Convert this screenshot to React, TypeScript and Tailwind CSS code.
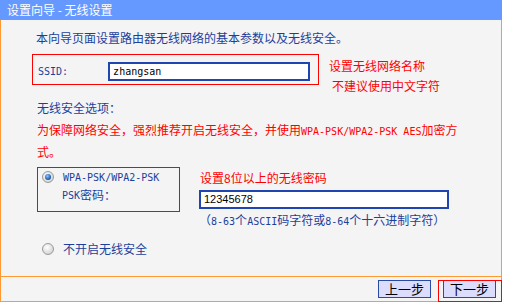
import React from 'react'

const mono = "font-['DejaVu_Sans_Mono',monospace] text-[10px]"

function Radio({ checked }: { checked?: boolean }) {
  return (
    <span className="relative inline-block w-[12px] h-[12px] shrink-0 rounded-full border border-[#9a9a9a] bg-[radial-gradient(circle_at_40%_35%,#ffffff,#d8d8d8_70%,#b4b4b4)]">
      {checked && (
        <span className="absolute left-[2px] top-[2px] w-[6px] h-[6px] rounded-full bg-[radial-gradient(circle_at_40%_35%,#8cc8ff,#1d63b8_60%,#0b2f6e)]" />
      )}
    </span>
  )
}

export default function App(): JSX.Element {
  return (
    <div className="w-[507px] h-[306px] bg-white text-[12px] font-['Noto_Sans_CJK_SC',sans-serif]">
      <div className="w-[502px] h-[20px] bg-[#6699ff] pl-[7px] leading-[20px] text-white">设置向导 - 无线设置</div>
      <div className="w-[502px] border-x border-b border-[#ff9933] bg-[#f4f4f4]">
        <div className="h-[256px] pl-[31px] pt-[11px]">
          <p className="pl-[4px] leading-[14px] text-[#1c3f9c]">本向导页面设置路由器无线网络的基本参数以及无线安全。</p>

          <div className="flex h-[31px] mt-[9px]">
            <div className="w-[287px] h-[31px] border border-[#ff0000] pl-[5px] pt-[7px]">
              <div className="flex h-[19px] items-center">
                <span className={`${mono} text-[#1c3f9c]`}>SSID:</span>
                <div className={`ml-[40px] w-[202px] h-[19px] border-2 border-[#1f45b0] bg-white pl-[3px] leading-[15px] text-black ${mono}`}>zhangsan</div>
              </div>
            </div>
            <div className="ml-[10px] pt-[2px] leading-[20px] text-[#ff0000]">
              <div>设置无线网络名称</div>
              <div className="pl-[3px]">不建议使用中文字符</div>
            </div>
          </div>

          <p className="mt-[16px] pl-[5px] leading-[14px] text-[#1c3f9c]">无线安全选项：</p>
          <p className="mt-[5px] pl-[5px] leading-[20px] text-[#ff0000]">
            为保障网络安全，强烈推荐开启无线安全，并使用<span className={mono}>WPA-PSK/WPA2-PSK AES</span>加密方
            <br />
            式。
          </p>

          <div className="flex mt-[5px] ml-[5px]">
            <div className="w-[143px] h-[45px] border border-[#ff0000] pl-[4px] pt-[1px] text-[#1c3f9c]">
              <div className="flex h-[16px] items-center gap-[9px]">
                <Radio checked />
                <span className={mono}>WPA-PSK/WPA2-PSK</span>
              </div>
              <div className="flex h-[16px] mt-[2px] items-center pl-[20px]">
                <span className={mono}>PSK</span>
                <span>密码：</span>
              </div>
            </div>
            <div className="ml-[19px] pt-[4px]">
              <p className="pl-[1px] leading-[14px] text-[#ff0000]">设置8位以上的无线密码</p>
              <div className="mt-[5px] w-[250px] h-[19px] border-2 border-[#1f45b0] bg-white pl-[3px] leading-[15px] text-[11px] text-black font-['Liberation_Sans',sans-serif]">12345678</div>
              <p className="mt-[4px] leading-[14px] text-[#1c3f9c]">
                （<span className={mono}>8-63</span>个<span className={mono}>ASCII</span>码字符或<span className={mono}>8-64</span>个十六进制字符）
              </p>
            </div>
          </div>

          <div className="flex h-[16px] mt-[12px] ml-[10px] items-center gap-[9px] text-[#1c3f9c]">
            <Radio />
            <span>不开启无线安全</span>
          </div>
        </div>

        <div className="flex h-[25px] justify-end gap-[12px] border-t border-[#ff9933] pt-[3px] pr-[5px]">
          <button className="w-[53px] h-[18px] border border-[#2a4aa8] bg-[#dcdcfc] text-[13px] leading-[16px] text-black">上一步</button>
          <div className="relative">
            <button className="w-[53px] h-[18px] border border-[#2a4aa8] bg-[#dcdcfc] text-[13px] leading-[16px] text-black">下一步</button>
            <span className="absolute left-[-5px] top-0 w-[64px] h-[22px] border border-[#ff0000]" />
          </div>
        </div>
      </div>
    </div>
  )
}
